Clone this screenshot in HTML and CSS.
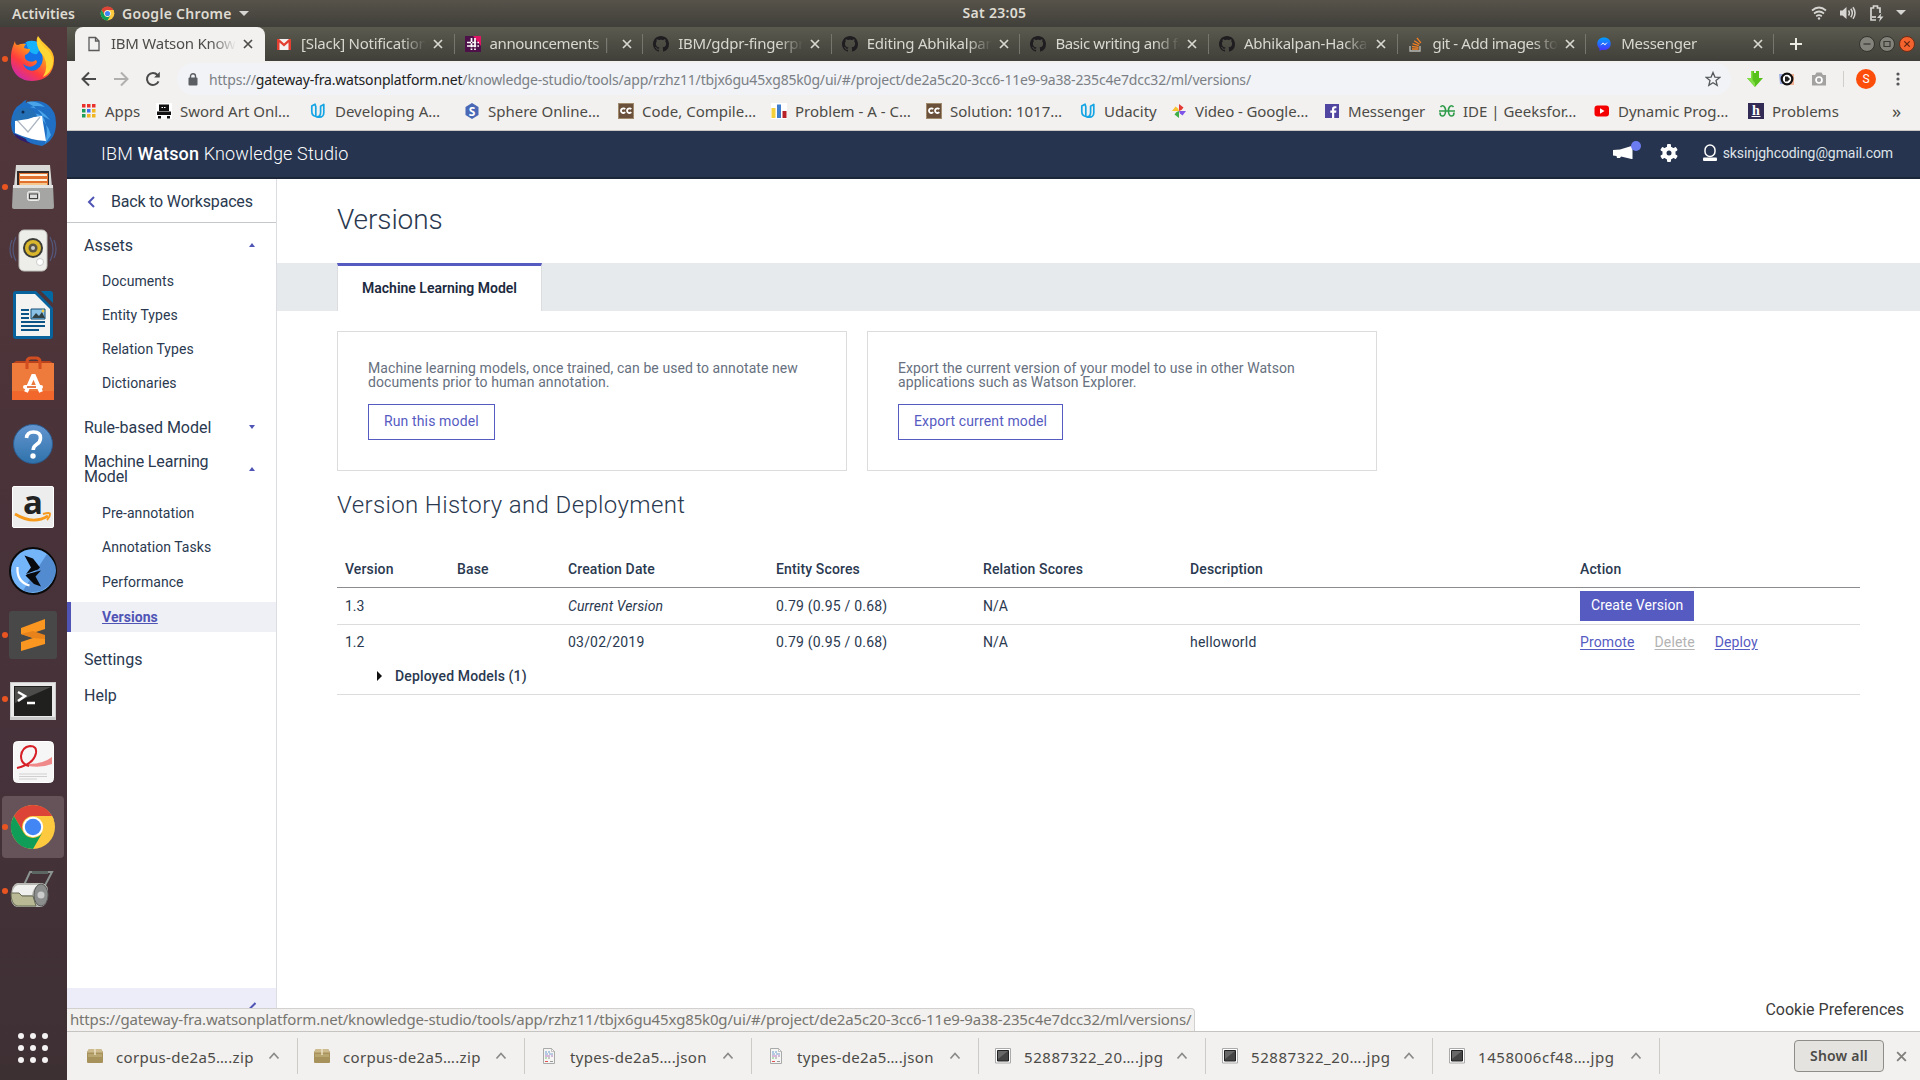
FILE: index.html
```html
<!DOCTYPE html>
<html lang="en">
<head>
<meta charset="utf-8">
<title>IBM Watson Knowledge Studio</title>
<link rel="stylesheet" href="styles.css">
</head>
<body>
<svg class="defs" aria-hidden="true">
  <symbol id="x" viewBox="0 0 12 12"><path d="M2 2l8 8M10 2l-8 8" fill="none" stroke="currentColor" stroke-width="1.7"/></symbol>
  <symbol id="chrome" viewBox="0 0 48 48">
    <circle cx="24" cy="24" r="22" fill="#fdc93f"/>
    <path d="M4.9 13A22 22 0 0 1 43.1 13H24A11 11 0 0 0 14.5 29.5Z" fill="#db4437"/>
    <path d="M4.9 13A22 22 0 0 0 24 46L33.5 29.5A11 11 0 0 1 14.5 29.5Z" fill="#109d58"/>
    <path d="M43.1 13H24v4h21z" fill="#fdc93f"/>
    <circle cx="24" cy="24" r="10.2" fill="#fff"/><circle cx="24" cy="24" r="8.2" fill="#4285f4"/>
  </symbol>
  <symbol id="github" viewBox="0 0 16 16"><path d="M8 0C3.58 0 0 3.58 0 8c0 3.54 2.29 6.53 5.47 7.59.4.07.55-.17.55-.38 0-.19-.01-.82-.01-1.49-2.01.37-2.53-.49-2.69-.94-.09-.23-.48-.94-.82-1.13-.28-.15-.68-.52-.01-.53.63-.01 1.08.58 1.23.82.72 1.21 1.87.87 2.33.66.07-.52.28-.87.51-1.07-1.78-.2-3.64-.89-3.64-3.95 0-.87.31-1.59.82-2.15-.08-.2-.36-1.02.08-2.12 0 0 .67-.21 2.2.82.64-.18 1.32-.27 2-.27s1.36.09 2 .27c1.53-1.04 2.2-.82 2.2-.82.44 1.1.16 1.92.08 2.12.51.56.82 1.27.82 2.15 0 3.07-1.87 3.75-3.65 3.95.29.25.54.73.54 1.48 0 1.07-.01 1.93-.01 2.2 0 .21.15.46.55.38A8.01 8.01 0 0 0 16 8c0-4.42-3.58-8-8-8z" fill="#1f1d20"/></symbol>
  <symbol id="udacity" viewBox="0 0 16 16"><path d="M5 1.200L1.800 3v5.500c0 2.700 1.500 4.500 4 5V3.700L5 1.200zM6.200 13.700c3 .3 4.400-1.500 4.400-4.300V3.200l3.200-1.700v8.300c0 2.500-1.800 4.400-4.200 4.400-1.300 0-2.500-.2-3.400-.5" fill="none" stroke="#16a5e4" stroke-width="1.700" stroke-linejoin="round"/></symbol>
  <symbol id="cc" viewBox="0 0 16 16"><path d="M0 0h16v16H0z" fill="#a08b6c"/><path d="M1 1h14v14H1z" fill="#6b513b"/><path d="M7.200 6.200A2.400 2.300 0 1 0 7.200 9.200M13.300 6.200A2.400 2.300 0 1 0 13.300 9.200" fill="none" stroke="#fff" stroke-width="1.800"/></symbol>
  <symbol id="box" viewBox="0 0 16 16"><path d="M2 1h12l2 3v10a1 1 0 0 1-1 1H1a1 1 0 0 1-1-1V4z" fill="#a8925c"/><path d="M2 1h12l2 3.500H0z" fill="#cdbb8d"/><path d="M1 6h14v3H1z" fill="#b9a570"/><path d="M7.300 1h1.400v6H7.300z" fill="#efe6cb"/></symbol>
  <symbol id="doc" viewBox="0 0 16 18"><path d="M2.500 1.500h8l3 3v12h-11z" fill="#f5f5f3" stroke="#a9a9a9"/><path d="M10.500 1.500v3h3z" fill="#fff" stroke="#a9a9a9" stroke-width=".7"/><path d="M4 5h2M7 5h2" stroke="#6b9bd0"/><path d="M4 7h3M8 7h4" stroke="#7a9fd0"/><path d="M4 9h5M10 9h2" stroke="#b77ac0"/><path d="M4 11h2" stroke="#74c77a"/><path d="M7 11h2M9 14.500h3" stroke="#999"/><path d="M4 14.500h3" stroke="#e05050"/></symbol>
  <symbol id="pic" viewBox="0 0 16 16"><path d="M.5.500h15v14.500H.500z" fill="#fff" stroke="#aaa"/><path d="M2.500 2.500h11v10.500h-11z" fill="#444" stroke="#222"/><path d="M3 3h10l-10 8z" fill="#686868"/></symbol>
  <symbol id="up" viewBox="0 0 12 12"><path d="M1.500 8.500L6 3.500l4.500 5" fill="none" stroke="#8a8a88" stroke-width="1.700"/></symbol>
</svg>

<header class="topbar">
  <span class="activities">Activities</span>
  <span class="appmenu"><svg width="15" height="15"><use href="#chrome"/></svg>Google Chrome<i class="caret"></i></span>
  <span class="clock">Sat 23:05</span>
  <span class="tray">
    <svg width="16" height="16" viewBox="0 0 16 16" fill="none" stroke="#d6d5d1" stroke-width="1.700"><path d="M1 5.500Q8-.5 15 5.500M3 8.500q5-4 10 0M5.200 11.200q2.800-2 5.600 0"/><circle cx="8" cy="13.500" r="1.200" fill="#d6d5d1" stroke="none"/></svg>
    <svg width="18" height="16" viewBox="0 0 18 16" fill="none" stroke="#d6d5d1" stroke-width="1.500"><path d="M1 5.500h2.500L7.500 2v12l-4-3.500H1z" fill="#d6d5d1" stroke="none"/><path d="M9.500 5.500q1.800 2.500 0 5M11.800 3.800q3 4.200 0 8.400M14 2.200q4 5.800 0 11.600"/></svg>
    <svg width="15" height="18" viewBox="0 0 15 18" fill="none" stroke="#d6d5d1" stroke-width="1.700"><path d="M7 16H2V4h2.500V2h4v2H11v5"/><path d="M3 13h4"/><path d="M12.500 9L8 14h3l-1 4 4.500-5.500h-3z" fill="#d6d5d1" stroke="none"/></svg>
    <i class="caret"></i>
  </span>
</header>

<div class="desktop">
<nav class="dock">
  <a class="app run"><svg width="48" height="48" viewBox="0 1 48 48"><defs><linearGradient id="ff" x1=".9" y1="0" x2=".2" y2="1"><stop offset="0" stop-color="#ffe93b"/><stop offset=".4" stop-color="#ff9c1c"/><stop offset=".7" stop-color="#ff3b3f"/><stop offset="1" stop-color="#c828b8"/></linearGradient></defs><circle cx="23" cy="22" r="15" fill="#1472e8"/><path d="M17 8Q26 4 33 12L28 20Q20 22 17 8z" fill="#16b3fb"/><path d="M6 7q0 4 3 4 4-2 8-1-2 2-2 4 3 1 6 1 0 4-5 6-1 4 3 6 5 2 8-1 3 3-3 6-5 2-10-2 4 9 13 6 9-5 6-17-1-5-5-9-1-5 1-8 3 5 9 10 8 7 7 15-1 19-22 20C9 47 1 36 2 24 2 16 4 12 6 7z" fill="url(#ff)"/><path d="M29 3q3 8 9 12 7 7 6 15-2 9-10 13 6-10 1-20-7-8-7-14z" fill="#ffd633"/></svg></a>
  <a class="app"><svg width="48" height="48" viewBox="0 0 48 48"><path d="M2 25Q2 10 13 4q2-3 5-3-2 2-1 3Q30-1 39 6q8 6 8 18 0 17-14 23Q15 44 5 36q-3-5-3-11z" fill="#1f6fc4"/><path d="M17 3q10-2 19 5-8-2-15 0 12 2 20 13-9-6-18-7 15 7 19 22l-6 9Q44 16 17 3z" fill="#4aa4ea"/><path d="M4 34q5 9 21 11-8-2-8-5z" fill="#301d6b"/><path d="M6 20l27-3 4 25Q21 41 6 34z" fill="#fff"/><path d="M8 21l11 12 12-15" fill="none" stroke="#aeb7c2" stroke-width="1.300"/><path d="M14 9Q4 12 6 22l13-2 9-3q-4-9-14-8z" fill="#2370b7"/><circle cx="14" cy="13" r="1.500" fill="#102b50"/></svg></a>
  <a class="app run"><svg width="48" height="48" viewBox="-1 -1 48 48"><path d="M6 1h34l2 22H4z" fill="#d8d8d6"/><path d="M7 7h32v17H7z" fill="#332b27"/><path d="M9 9h29v14H9z" fill="#e0712e"/><path d="M10 10h27v2H10zM10 15h27v2H10z" fill="#fff3df"/><path d="M10 19h27v5H10z" fill="#f6c88e"/><path d="M3 21h40l1 22q0 2-2 2H4q-2 0-2-2z" fill="#a5a5a3"/><path d="M3 21h40v3H3z" fill="#e3e3e1"/><rect x="17.500" y="27.500" width="12" height="9" rx="2" fill="#c9c9c7" stroke="#eee"/><rect x="19.500" y="30" width="8" height="4.500" fill="#ddd" stroke="#444"/></svg></a>
  <a class="app"><svg width="48" height="48" viewBox="0 0 48 48"><path d="M7 10Q1 22 7 34M3 13q-4 9 0 18M41 10q6 12 0 24M45 13q4 9 0 18" fill="none" stroke="#54587d" stroke-width="1.200"/><rect x="10" y="3" width="28" height="41" rx="5" fill="#ededea" stroke="#bfc0bb"/><circle cx="24" cy="21" r="10" fill="#3b3b38"/><circle cx="24" cy="21" r="8" fill="#d9b62c"/><circle cx="24" cy="21" r="4.500" fill="#5a5643"/><circle cx="24" cy="21" r="2" fill="#ccc"/><circle cx="31" cy="35" r="3.500" fill="#fff" stroke="#ccc"/></svg></a>
  <a class="app"><svg width="48" height="48" viewBox="0 0 48 48"><path d="M4 3q0-3 3-3h20l17 17v28q0 3-3 3H7q-3 0-3-3z" fill="#08639c"/><path d="M32 0h9q3 0 3 3v9z" fill="#0369a3"/><path d="M7 3h19l15 15v27H7z" fill="#f3f3f2"/><path d="M12 19h8M12 23h8M12 27h8M12 31h24M12 35h24M12 39h18" stroke="#0b5486" stroke-width="1.900"/><path d="M22 18h14v10H22z" fill="#8ac1e7" stroke="#124c77"/><path d="M23 27l4-5 3 3 3-4 3 6z" fill="#324244"/><circle cx="34" cy="20" r="1.400" fill="#f0ca43"/></svg></a>
  <a class="app"><svg width="48" height="48" viewBox="0 -1 48 48"><path d="M3 8l4-3h34l4 3z" fill="#b9411b"/><path d="M3 7h42v37H3z" fill="#ee7a3c"/><path d="M3 35h42v9H3z" fill="#f2682c"/><path d="M18 13V6q0-4 4-4h5q4 0 4 4v7" fill="none" stroke="#d24d20" stroke-width="3"/><path d="M17 36l7-16h1l7 16" fill="none" stroke="#fff" stroke-width="4"/><rect x="14" y="29" width="20" height="4" rx="2" fill="#fff"/><path d="M18 31h9" stroke="#e25c24" stroke-width="1.600"/></svg></a>
  <a class="app"><svg width="48" height="48" viewBox="0 -1 48 48"><defs><linearGradient id="hp" x2="0" y2="1"><stop stop-color="#6496d0"/><stop offset="1" stop-color="#2f72ab"/></linearGradient></defs><circle cx="24" cy="24" r="19.500" fill="url(#hp)" stroke="#2b5d91"/><path d="M17.500 18q.5-6 7-6 7 0 7 6 0 4-4 6.500-3.300 2-3.300 5.500" fill="none" stroke="#fff" stroke-width="3.600"/><circle cx="24" cy="36" r="2.700" fill="#fff"/></svg></a>
  <a class="app"><svg width="48" height="48" viewBox="0 0 48 48"><rect x="3.500" y="3.500" width="41" height="41" rx="1.500" fill="#ededed" stroke="#fff"/><text x="24" y="31" class="ic-amz">a</text><path d="M6 31q18 11 33 2" fill="none" stroke="#f79a1c" stroke-width="2.800"/><path d="M34 31q7-2 7 0 0 3-3 6" fill="none" stroke="#f79a1c" stroke-width="2"/></svg></a>
  <a class="app"><svg width="48" height="48" viewBox="0 0 48 48"><circle cx="24" cy="24" r="23" fill="#74b4f8" stroke="#0a0a0a" stroke-width="2"/><path d="M14 43.500L38 7q15 13 5 28-11 14-29 8.500z" fill="#528bd0"/><path d="M15.500 8.500L24 11.500l7 9-2 2-12 4.500 5-6.500z" fill="#080a0e"/><path d="M32 23.500l-5.500 6 5.500 10-7-2.500-8.500-8.500 2-1.500z" fill="#080a0e"/><path d="M8.500 20q-1 15 12 18.500" fill="none" stroke="#fff" stroke-width="2.200"/></svg></a>
  <a class="app run"><svg width="48" height="48" viewBox="0 0 48 48"><rect width="48" height="48" rx="3" fill="#484848"/><path d="M12 17l24-9v10l-12 4 12 4v7l-24 7V31l12-4-12-4z" fill="#fb9620"/><path d="M12 23l12-3 12 4v4l-12-1z" fill="#e8821a"/></svg></a>
  <a class="app run"><svg width="48" height="48" viewBox="0 0 48 48"><path d="M1 7h46v38H1z" fill="#c9c9c9"/><path d="M2 8h44v34H2z" fill="#e9e9e9"/><path d="M5 11h38v30H5z" fill="#20201f"/><path d="M6 12h36L6 28z" fill="#4c4c4b"/><path d="M9 17l7 4-7 5M18 28h8" fill="none" stroke="#fff" stroke-width="2.500"/></svg></a>
  <a class="app"><svg width="48" height="48" viewBox="0 0 48 48"><rect x="4.500" y="2.500" width="40" height="41" rx="4" fill="#f6f6f6" stroke="#fff"/><path d="M10 35h28M10 37.500h28M10 40h18" stroke="#cfcfcf" stroke-width="1.200"/><path d="M20 25q14 0 23-7v7q-10 4-24 2z" fill="#f08a8a"/><path d="M8 29Q25 25 27 14 28 7 21 7q-8 1-9 10 0 8 8 10" fill="none" stroke="#d61f26" stroke-width="2"/></svg></a>
  <a class="app run active"><svg width="48" height="48"><use href="#chrome"/></svg></a>
  <a class="app run"><svg width="48" height="48" viewBox="0 -2 48 48"><path d="M15 16l6-13h22L32 24" fill="none" stroke="#8b9490" stroke-width="2"/><path d="M23 2h16v3H23z" fill="#5c6662"/><path d="M8 14h25q7 1 6 12t-7 12H8q-7-2-6-12 1-11 6-12z" fill="#b9b9b3"/><path d="M9 16h20q-5 3-6 10l-20 0q1-9 6-10z" fill="#f0f0ee"/><path d="M2 24h8l3 3h11l3 10H8q-6-2-6-13z" fill="#bab996" stroke="#666a52"/><ellipse cx="32" cy="26" rx="7" ry="11" fill="#8c8e8d" stroke="#5b5d5c"/><circle cx="32" cy="26" r="3.500" fill="#ccc"/></svg></a>
  <a class="grid"><svg width="32" height="32" viewBox="0 0 32 32" fill="#f4f2f2"><circle cx="4" cy="4" r="3"/><circle cx="16" cy="4" r="3"/><circle cx="28" cy="4" r="3"/><circle cx="4" cy="16" r="3"/><circle cx="16" cy="16" r="3"/><circle cx="28" cy="16" r="3"/><circle cx="4" cy="28" r="3"/><circle cx="16" cy="28" r="3"/><circle cx="28" cy="28" r="3"/></svg></a>
</nav>

<div class="browser">
  <div class="tabs">
    <div class="tab on"><svg width="16" height="16" viewBox="0 0 16 16" fill="none" stroke="#5a5a5a" stroke-width="1.300"><path d="M3 1.500h6.500L13 5v9.500H3z"/><path d="M9.500 1.500V5H13"/></svg><span>IBM Watson Knowledge</span><svg class="close" width="12" height="12"><use href="#x"/></svg></div>
    <div class="tab"><svg width="16" height="16" viewBox="0 0 16 16"><path d="M1 3h14v11H1z" fill="#f4f1f0"/><path d="M1 14V3h2l5 4.500L13 3h2v11h-2.500V6.500L8 10.500l-4.500-4V14z" fill="#e33e2f"/></svg><span>[Slack] Notification</span><svg class="close" width="12" height="12"><use href="#x"/></svg></div>
    <div class="tab"><svg width="16" height="16" viewBox="0 0 16 16"><path d="M0 0h16v16H0z" fill="#4d1049"/><path d="M8 0h8v10z" fill="#e01563"/><path d="M6.500 2v12M10 2v12M2 6.500h12M2 10h12" stroke="#fff" stroke-width="1.700" stroke-dasharray="4 1.200"/></svg><span class="wide">announcements | IBM</span><svg class="close" width="12" height="12"><use href="#x"/></svg></div>
    <div class="tab"><svg width="16" height="16"><use href="#github"/></svg><span>IBM/gdpr-fingerprint</span><svg class="close" width="12" height="12"><use href="#x"/></svg></div>
    <div class="tab"><svg width="16" height="16"><use href="#github"/></svg><span>Editing Abhikalpan</span><svg class="close" width="12" height="12"><use href="#x"/></svg></div>
    <div class="tab"><svg width="16" height="16"><use href="#github"/></svg><span class="wide">Basic writing and for</span><svg class="close" width="12" height="12"><use href="#x"/></svg></div>
    <div class="tab"><svg width="16" height="16"><use href="#github"/></svg><span>Abhikalpan-Hackathon</span><svg class="close" width="12" height="12"><use href="#x"/></svg></div>
    <div class="tab"><svg width="16" height="16" viewBox="0 0 16 16" fill="none"><path d="M2 10v5h10v-5" stroke="#b9b9b4" stroke-width="1.300"/><path d="M4 13h6.500M4 10.500l6.500.8M4.600 7.700l6.200 1.900M6.200 4.700l5.400 3.500M8.900 1.800l4 5" stroke="#f48024" stroke-width="1.300"/></svg><span class="wide">git - Add images to</span><svg class="close" width="12" height="12"><use href="#x"/></svg></div>
    <div class="tab"><svg width="16" height="16" viewBox="0 0 16 16"><defs><linearGradient id="ms" x2="0" y2="1"><stop stop-color="#00a0ff"/><stop offset="1" stop-color="#4a2cff"/></linearGradient></defs><path d="M8 1.500c4 0 6.700 2.700 6.700 6.200S12 14 8 14c-.8 0-1.500-.1-2.200-.3L3.500 15v-2.600C2 11.200 1.300 9.600 1.300 7.700 1.300 4.200 4 1.500 8 1.500z" fill="url(#ms)"/><path d="M4 9.500l3-3 1.800 1.500L12 6 9 9.200 7.200 7.700z" fill="#fff"/></svg><span>Messenger</span><svg class="close" width="12" height="12"><use href="#x"/></svg></div>
    <svg class="plus" width="12" height="12" viewBox="0 0 12 12"><path d="M6 0v12M0 6h12" stroke="#ecebe4" stroke-width="2"/></svg>
    <div class="wm">
      <svg width="16" height="16" viewBox="0 0 16 16"><circle cx="8" cy="8" r="7.500" fill="#83827b" stroke="#33322d"/><path d="M4.500 8h7" stroke="#3b3a35" stroke-width="1.300"/></svg>
      <svg width="16" height="16" viewBox="0 0 16 16"><circle cx="8" cy="8" r="7.500" fill="#83827b" stroke="#33322d"/><path d="M5 5.500h6v5H5z" fill="none" stroke="#3b3a35" stroke-width="1.200"/></svg>
      <svg width="16" height="16" viewBox="0 0 16 16"><circle cx="8" cy="8" r="7.500" fill="#f4622d" stroke="#6d2d16"/><path d="M5.300 5.300l5.400 5.400M10.700 5.300l-5.400 5.400" stroke="#5a2410" stroke-width="1.200"/></svg>
    </div>
  </div>

  <div class="nav">
    <svg width="16" height="16" viewBox="0 0 16 16" fill="none" stroke="#4a4a4a" stroke-width="2"><path d="M15 8H2M8 1.500L1.500 8 8 14.500"/></svg>
    <svg width="16" height="16" viewBox="0 0 16 16" fill="none" stroke="#b0afad" stroke-width="2"><path d="M1 8h13M8 1.500L14.500 8 8 14.500"/></svg>
    <svg width="16" height="16" viewBox="0 0 16 16" fill="none" stroke="#4a4a4a" stroke-width="2"><path d="M13.500 10.300A6 6 0 1 1 12.500 4"/><path d="M14.800.8v5.700H9.100z" fill="#4a4a4a" stroke="none"/></svg>
    <div class="omni">
      <svg width="10" height="13" viewBox="0 0 10 13"><rect x=".5" y="4.500" width="9" height="8" rx="1" fill="#5b5e63"/><path d="M2.500 5V3.200a2.500 2.500 0 0 1 5 0V5" fill="none" stroke="#5b5e63" stroke-width="1.400"/></svg>
      <span class="url">https://<b>gateway-fra.watsonplatform.net</b>/knowledge-studio/tools/app/rzhz11/tbjx6gu45xg85k0g/ui/#/project/de2a5c20-3cc6-11e9-9a38-235c4e7dcc32/ml/versions/</span>
      <svg width="16" height="16" viewBox="0 0 16 16"><path d="M8 1.500l1.900 4.600 4.900.3-3.800 3.200 1.200 4.800L8 11.800l-4.200 2.600L5 9.600 1.200 6.400l4.900-.3z" fill="none" stroke="#55585c" stroke-width="1.300"/></svg>
    </div>
    <svg width="16" height="16" viewBox="0 0 16 16"><path d="M4 0h3v2h2V0h3v7h4l-8 9-8-9h4z" fill="#57c11c"/><path d="M4 0h1.500v9L8 12v4L0 7h4z" fill="#83dd48"/></svg>
    <svg width="16" height="16" viewBox="0 0 16 16"><path d="M0 3h7v10H1z" fill="#9eaee0"/><path d="M9 3h6v11H9z" fill="#f2b295"/><circle cx="8" cy="8" r="5.300" fill="#fff" stroke="#111" stroke-width="2.200"/><path d="M6 5.500h2.500L11 8l-2.500 2.500H6z" fill="#222"/></svg>
    <svg width="16" height="16" viewBox="0 0 16 16"><path d="M1 4h3l1.500-2.500h5L12 4h3v10.500H1z" fill="#a3a2a0"/><circle cx="8" cy="9" r="3" fill="none" stroke="#fff" stroke-width="1.700"/></svg>
    <i class="vsep"></i>
    <span class="avatar">S</span>
    <svg width="4" height="16" viewBox="0 0 4 16" fill="#55555a"><circle cx="2" cy="3" r="1.600"/><circle cx="2" cy="8" r="1.600"/><circle cx="2" cy="13" r="1.600"/></svg>
  </div>

  <div class="marks">
    <a><svg width="16" height="16" viewBox="0 0 16 16"><path d="M1 1h3.500v3.500H1zM6 1h3.500v3.500H6zM11 1h3.500v3.500H11z" fill="#e9302a"/><path d="M1 6h3.500v3.500H1zM1 11h3.500v3.500H1z" fill="#1d9d58"/><path d="M6 6h3.500v3.500H6z" fill="#3f6ef0"/><path d="M11 6h3.500v3.500H11zM6 11h3.500v3.500H6zM11 11h3.500v3.500H11z" fill="#f0b520"/></svg>Apps</a>
    <a><svg width="16" height="16" viewBox="0 0 16 16"><path d="M0 0h16v16H0z" fill="#fff"/><path d="M3 1.500h10V8H3zM1 8.500h14v3.500H1zM2 13h3v2.500H2zM11 13h3v2.500h-3zM4 12l8 3" fill="#111"/><path d="M5.500 4.500h5" stroke="#fff" stroke-dasharray="1.500 1"/></svg>Sword Art Onl…</a>
    <a><svg width="18" height="16"><use href="#udacity"/></svg>Developing A…</a>
    <a><svg width="16" height="16" viewBox="0 0 16 16"><path d="M8 0l6.500 4v8L8 16l-6.500-4V4z" fill="#4a68b6"/><text x="8" y="12.500" class="ic-s">S</text></svg>Sphere Online…</a>
    <a><svg width="16" height="16"><use href="#cc"/></svg>Code, Compile…</a>
    <a><svg width="16" height="16" viewBox="0 0 16 16"><path d="M0 0h16v16H0z" fill="#fff"/><path d="M.5 5h4v10h-4z" fill="#f3cf3a"/><path d="M6 1.500h4V15H6z" fill="#3e7dcd"/><path d="M11.500 8h4v7h-4z" fill="#b7222a"/></svg>Problem - A - C…</a>
    <a><svg width="16" height="16"><use href="#cc"/></svg>Solution: 1017…</a>
    <a><svg width="16" height="16"><use href="#udacity"/></svg>Udacity</a>
    <a><svg width="16" height="16" viewBox="0 0 16 16"><path d="M8 8V1l4.500 3.500L10.500 7z" fill="#e53a35"/><path d="M8 8h7l-3.500 4.500L9 10.500z" fill="#7e55e8"/><path d="M8 8v7l-4.500-3.500L5.500 9z" fill="#3fae49"/><path d="M8 8H1l3.500-4.500L7 5.500z" fill="#f8c32c"/></svg>Video - Google…</a>
    <a><svg width="16" height="16" viewBox="0 0 16 16"><path d="M1 1h14v14H1z" fill="#5145a2"/><path d="M8 15V9.700H6.300V7.500H8V6q0-2.700 2.800-2.700h1.600v2h-1.200q-1 0-1 1v1.200h2.200l-.3 2.200h-1.900V15z" fill="#fff"/></svg>Messenger</a>
    <a><svg width="16" height="16" viewBox="0 0 16 16" fill="none" stroke="#2f9c4b" stroke-width="1.600"><path d="M0 8h16M1.500 4Q3 2 5 3.300 7 5 6.500 9q-.5 4-3 4Q1 13 1 9.500M14.500 4Q13 2 11 3.300 9 5 9.500 9q.5 4 3 4 2.500 0 2.500-3.500"/></svg>IDE | Geeksfor…</a>
    <a><svg width="16" height="16" viewBox="0 0 16 16"><rect x=".5" y="2.500" width="14.500" height="11" rx="3" fill="#f40000"/><path d="M6 5.200v5.600L10.500 8z" fill="#fff"/></svg>Dynamic Prog…</a>
    <a><svg width="16" height="16" viewBox="0 0 16 16"><path d="M0 0h16v16H0z" fill="#322b56"/><text x="8" y="12" class="ic-h">h</text><path d="M3.500 13.500h9" stroke="#fff"/></svg>Problems</a>
    <a class="more">»</a>
  </div>

  <div class="apphead">
    <h1>IBM <b>Watson</b> Knowledge Studio</h1>
    <span class="mega"><svg width="20" height="16" viewBox="0 0 20 16"><path d="M0 5l7-.5L18.500 1h1v13h-1L8 11.500 7 13H4l-.5-2L0 10.500z" fill="#fff"/></svg></span>
    <svg class="gear" width="18" height="18" viewBox="0 0 18 18"><g fill="#fff"><circle cx="9" cy="9" r="6.600"/><rect x="7" y="0" width="4" height="18" rx="1"/><rect x="7" y="0" width="4" height="18" rx="1" transform="rotate(60 9 9)"/><rect x="7" y="0" width="4" height="18" rx="1" transform="rotate(120 9 9)"/></g><circle cx="9" cy="9" r="2.500" fill="#26344f"/></svg>
    <span class="user"><svg width="16" height="18" viewBox="0 0 16 18"><rect x="3" y="1" width="10" height="11.500" rx="5" fill="none" stroke="#fff" stroke-width="1.500"/><rect x="1" y="13.500" width="14" height="3.500" rx="1" fill="#fff"/></svg>sksinjghcoding@gmail.com</span>
  </div>

  <div class="page">
    <aside class="side">
      <a class="back"><svg width="8" height="12" viewBox="0 0 8 12"><path d="M7 1L2 6l5 5" fill="none" stroke="#4f54b5" stroke-width="2"/></svg>Back to Workspaces</a>
      <div class="sec s1">Assets<i class="tri up"></i></div>
      <a class="sub">Documents</a><a class="sub">Entity Types</a><a class="sub">Relation Types</a><a class="sub">Dictionaries</a>
      <div class="sec s2">Rule-based Model<i class="tri down"></i></div>
      <div class="sec s3"><span>Machine Learning Model</span><i class="tri up"></i></div>
      <a class="sub">Pre-annotation</a><a class="sub">Annotation Tasks</a><a class="sub last">Performance</a>
      <a class="sub on"><u>Versions</u></a>
      <div class="sec s4">Settings</div>
      <div class="sec s5">Help</div>
      <div class="collapse"><svg width="7" height="12" viewBox="0 0 7 12"><path d="M6.500 1L1.500 6l5 5" fill="none" stroke="#4f54b5" stroke-width="2"/></svg></div>
    </aside>
    <main class="main">
      <h2>Versions</h2>
      <div class="strip"><span>Machine Learning Model</span></div>
      <div class="cards">
        <section class="card"><p>Machine learning models, once trained, can be used to annotate new documents prior to human annotation.</p><button>Run this model</button></section>
        <section class="card"><p>Export the current version of your model to use in other Watson applications such as Watson Explorer.</p><button>Export current model</button></section>
      </div>
      <h3>Version History and Deployment</h3>
      <div class="table">
        <div class="row head"><span>Version</span><span>Base</span><span>Creation Date</span><span>Entity Scores</span><span>Relation Scores</span><span>Description</span><span>Action</span></div>
        <div class="row r1"><span>1.3</span><span></span><em>Current Version</em><span class="num">0.79 (0.95 / 0.68)</span><span>N/A</span><span></span><span><button class="primary">Create Version</button></span></div>
        <div class="row r2"><span>1.2</span><span></span><span class="num">03/02/2019</span><span class="num">0.79 (0.95 / 0.68)</span><span>N/A</span><span class="num">helloworld</span><span class="acts"><a>Promote</a><a class="off">Delete</a><a>Deploy</a></span></div>
        <div class="deployed"><i></i>Deployed Models (1)</div>
      </div>
      <footer>Cookie Preferences</footer>
    </main>
    <div class="status">https://gateway-fra.watsonplatform.net/knowledge-studio/tools/app/rzhz11/tbjx6gu45xg85k0g/ui/#/project/de2a5c20-3cc6-11e9-9a38-235c4e7dcc32/ml/versions/</div>
  </div>

  <div class="downloads">
    <div class="dl"><svg width="16" height="16"><use href="#box"/></svg><span>corpus-de2a5….zip</span><svg width="12" height="12"><use href="#up"/></svg></div>
    <div class="dl"><svg width="16" height="16"><use href="#box"/></svg><span>corpus-de2a5….zip</span><svg width="12" height="12"><use href="#up"/></svg></div>
    <div class="dl"><svg width="16" height="18"><use href="#doc"/></svg><span>types-de2a5….json</span><svg width="12" height="12"><use href="#up"/></svg></div>
    <div class="dl"><svg width="16" height="18"><use href="#doc"/></svg><span>types-de2a5….json</span><svg width="12" height="12"><use href="#up"/></svg></div>
    <div class="dl jpg"><svg width="16" height="16"><use href="#pic"/></svg><span>52887322_20….jpg</span><svg width="12" height="12"><use href="#up"/></svg></div>
    <div class="dl jpg"><svg width="16" height="16"><use href="#pic"/></svg><span>52887322_20….jpg</span><svg width="12" height="12"><use href="#up"/></svg></div>
    <div class="dl jpg"><svg width="16" height="16"><use href="#pic"/></svg><span>1458006cf48….jpg</span><svg width="12" height="12"><use href="#up"/></svg></div>
    <button class="showall">Show all</button>
    <svg class="dlx" width="13" height="13"><use href="#x"/></svg>
  </div>
</div>
</div>
</body>
</html>
```
FILE: styles.css
```css
* { box-sizing: border-box; }
html, body { height: 100%; }
body {
  margin: 0; width: 1920px; height: 1080px; overflow: hidden;
  display: flex; flex-direction: column;
  font-family: "Noto Sans", "Open Sans", sans-serif;
}
svg { flex: none; display: block; }
button { font: inherit; margin: 0; white-space: nowrap; }
.defs { display: none; }

/* desktop top bar */
.topbar {
  height: 27px; flex: none; display: grid; grid-template-columns: 88px 862.500px 1fr auto;
  align-items: center; padding: 0 14px 2px 12px;
  background: linear-gradient(#57534b, #403f39);
  color: #dfdbd2; font-size: 14px; font-weight: 600;
}
.activities { letter-spacing: .05px; padding-top: 1px; }
.appmenu { display: flex; align-items: center; gap: 7px; letter-spacing: .3px; padding-top: 1px; }
.caret { border: 5px solid transparent; border-top-color: #d6d5d1; border-bottom: 0; }
.clock { letter-spacing: .3px; white-space: nowrap; }
.tray { display: flex; align-items: center; gap: 12px; }
.tray .caret { margin-left: 0; }

.desktop { flex: 1; display: flex; min-height: 0; }

/* launcher */
.dock {
  width: 67px; flex: none; display: flex; flex-direction: column;
  background: linear-gradient(#53383b, #4a3339 40%, #46323a 70%, #3d3033);
}
.app { height: 64px; flex: none; display: flex; align-items: center; position: relative; padding-left: 9px; }
.app.run::before { content: ""; position: absolute; left: 2px; top: 29px; width: 6px; height: 6px; border-radius: 50%; background: #e95420; }
.app.active { margin: 1px 3px 1px 2px; height: 62px; padding-left: 7px; background: #66535a; border-radius: 4px; }
.app.active::before { left: 0; top: 28px; }
.grid { margin: auto 0 16px 17px; }
.ic-amz { font: bold 33px "Open Sans", sans-serif; text-anchor: middle; fill: #222; }
.ic-s { font: bold 12px "Noto Sans", sans-serif; text-anchor: middle; fill: #fff; }
.ic-h { font: bold 14px "Liberation Serif", serif; text-anchor: middle; fill: #fff; }

.browser { flex: 1; min-width: 0; display: flex; flex-direction: column; background: #fff; }

/* tabs */
.tabs {
  height: 34px; flex: none; display: flex; align-items: center; padding-left: 8px;
  background: linear-gradient(#5b5a4f, #403f39); color: #d9d8d0; font-size: 15px;
}
.tab { width: 188.600px; height: 34px; display: flex; align-items: center; padding-left: 11px; position: relative; }
.tab span {
  width: 126px; margin: 0 0 2px 9px; overflow: hidden; white-space: nowrap; letter-spacing: -.25px;
  -webkit-mask-image: linear-gradient(90deg, #000 100px, transparent 125px);
  mask-image: linear-gradient(90deg, #000 100px, transparent 125px);
}
.tab .wide { letter-spacing: -.4px; }
.tab .close { margin-left: 5px; }
.tab:nth-child(n+3)::before { content: ""; position: absolute; left: 0; top: 7px; width: 1px; height: 20px; background: #77766d; }
.tab.on { width: 190px; border-radius: 8px 8px 0 0; background: #f2f1ef; color: #4d4c48; }
.tab:nth-child(9)::after { content: ""; position: absolute; right: 0; top: 7px; width: 1px; height: 20px; background: #77766d; }
.plus { margin-left: 16px; }
.wm { margin: 0 5px 0 auto; display: flex; gap: 4px; }

/* toolbar */
.nav { height: 36px; flex: none; display: flex; align-items: center; padding: 0 20px 0 14px; gap: 16px; background: #f2f1ef; }
.omni {
  height: 32px; flex: 1; display: flex; align-items: center; gap: 11px; padding: 0 10px 0 11px;
  background: #f1f3f6; border-radius: 16px; color: #7b7f85;
}
.url { flex: 1; font-size: 14px; letter-spacing: -.18px; white-space: nowrap; }
.url b { font-weight: 400; color: #222; }
.vsep { width: 1px; height: 16px; background: #cfcecb; }
.avatar { width: 20px; height: 20px; margin: 0 4px 0 -4px; border-radius: 50%; background: #fd4d0b; color: #fff; font: 12px/20px Roboto, sans-serif; text-align: center; }

/* bookmarks */
.marks {
  height: 34px; flex: none; display: grid; align-items: center; padding: 0 0 4px 14px;
  grid-template-columns: 75px 153px 155px 154px 153px 155px 154px 91px 153px 115px 155px 154px 141px 1fr;
  background: #f2f1ef; border-bottom: 1px solid #c9c8c5; color: #4c4b47; font-size: 15px;
}
.marks a { display: flex; align-items: center; gap: 8px; white-space: nowrap; height: 24px; line-height: 22px; padding-bottom: 1px; }
.marks a:nth-child(9), .marks a:nth-child(10) { letter-spacing: -.1px; }
.marks .more { padding-left: 3px; font-size: 18px; }

/* application header */
.apphead {
  height: 48px; flex: none; display: flex; align-items: center; padding: 0 27px 2px 34px;
  background: #26344f; border-bottom: 2px solid #1b2738; color: #dfe3e9; font-family: Roboto, sans-serif;
}
.apphead h1 { margin: 0; flex: 1; font-size: 18px; font-weight: 300; color: #fff; letter-spacing: .16px; }
.apphead b { font-weight: 500; }
.mega { position: relative; margin-right: 27px; }
.mega::after { content: ""; position: absolute; left: 18px; top: -4px; width: 10px; height: 10px; border-radius: 50%; background: #6b7cf0; }
.gear { margin-right: 24px; }
.user { display: flex; align-items: center; gap: 5px; font-size: 14px; letter-spacing: -.08px; }

.page { flex: 1; min-height: 0; display: flex; position: relative; font-family: Roboto, sans-serif; color: #2a3950; }

/* sidebar */
.side { width: 210px; flex: none; display: flex; flex-direction: column; border-right: 1px solid #dcdde2; font-size: 14px; letter-spacing: .05px; }
.back { height: 44px; display: flex; align-items: center; gap: 16px; padding: 2px 0 0 20px; border-bottom: 1px solid #c6c7cb; font-size: 16px; letter-spacing: -.18px; }
.sec { display: flex; align-items: center; padding: 0 21px 0 17px; font-size: 16px; line-height: 15px; letter-spacing: 0; }
.sec span { width: 130px; letter-spacing: -.15px; }
.tri { margin-left: auto; border: 3px solid transparent; }
.tri.up { border-bottom: 4px solid #4f54b5; border-top: 0; }
.tri.down { border-top: 4px solid #4f54b5; border-bottom: 0; }
.sub { height: 34px; display: flex; align-items: center; padding-left: 35px; }
.s1 { height: 41px; padding-top: 3px; }
.s2 { height: 34px; margin-top: 10px; }
.s3 { height: 52px; padding-bottom: 2px; }
.sub.last { height: 35px; padding-top: 1px; }
.sub.on { height: 30px; margin-top: 3px; padding: 0 0 1px 31px; border-left: 4px solid #4f54b5; background: #eff0f5; color: #4f54b5; font-weight: 700; }
.s4 { height: 36px; margin-top: 9px; }
.s5 { height: 36px; }
.collapse { margin-top: auto; height: 43px; flex: none; background: #ecedf8; padding: 14px 0 0 182px; }

/* main */
.main { flex: 1; min-width: 0; display: flex; flex-direction: column; }
h2 { margin: 0; height: 84px; padding: 0 0 3px 60px; display: flex; align-items: center; font-size: 28px; font-weight: 300; letter-spacing: -.1px; }
.strip { height: 48px; flex: none; background: #e7eaed; padding-left: 60px; }
.strip span {
  display: flex; align-items: center; justify-content: center; width: 205px; height: 48px; color: #1c2a40; padding-bottom: 1px;
  background: #fff; border: 1px solid #dcdddf; border-top: 3px solid #565bc2; border-bottom: 0; font-size: 14px; font-weight: 600;
}
.cards { display: flex; gap: 20px; padding: 20px 0 0 60px; }
.card { width: 510px; height: 140px; border: 1px solid #dcdcdc; padding: 29px 30px 0; font-size: 14px; }
.card p { margin: 0 0 15px; line-height: 14px; color: #66707e; letter-spacing: .075px; }
.card button { display: block; height: 36px; padding: 0 15px 2px; border: 1px solid #565bc2; background: #fff; color: #565bc2; letter-spacing: .13px; }
h3 { margin: 22px 0 0 60px; height: 24px; line-height: 24px; font-size: 24px; font-weight: 300; letter-spacing: .37px; }
.table { margin: 34px 60px 0; font-size: 14px; border-bottom: 1px solid #dcdcdc; height: 144px; }
.row { display: grid; grid-template-columns: 112px 111px 208px 207px 207px 390px 1fr; align-items: center; padding: 0 0 1px 8px; }
.row.head { height: 37px; padding-bottom: 0; border-bottom: 1px solid #8c8c90; font-weight: 500; letter-spacing: .13px; }
.r1 { height: 37px; border-bottom: 1px solid #dcdcdc; }
.r1 em { letter-spacing: .1px; }
.r2 { height: 35px; }
.num { letter-spacing: .2px; }
.primary { display: block; height: 30px; margin-top: 1px; padding: 0 11px 2px; border: 0; background: #565bc2; color: #fff; letter-spacing: .07px; }
.acts { display: flex; gap: 20px; color: #565bc2; letter-spacing: .12px; }
.acts a { text-decoration: underline; text-underline-offset: 2px; }
.acts .off { color: #b3b3b3; }
.deployed { display: flex; align-items: center; height: 31px; padding-left: 40px; gap: 13px; font-weight: 500; letter-spacing: .14px; }
.deployed i { border: 5px solid transparent; border-left-color: #111; border-right: 0; }
footer { margin: auto 16px 12px auto; font-size: 16px; line-height: 19px; color: #3c3c3c; }

.status {
  position: absolute; left: 0; bottom: 0; width: 1128px; height: 23px; padding-left: 3px;
  background: #f2f1ef; border: 1px solid #d2d1d0; border-width: 1px 1px 0 0; border-radius: 0 4px 0 0;
  font: 15px/20px "Noto Sans", sans-serif; letter-spacing: -.16px; color: #77756f; white-space: nowrap;
}

/* downloads */
.downloads { height: 49px; flex: none; display: flex; align-items: center; padding: 0 12px 0 4px; background: #f2f1ef; border-top: 1px solid #c5c4c1; color: #4c4b47; font-size: 15px; }
.dl { width: 227px; height: 36px; display: flex; align-items: center; padding: 0 17px 0 16px; border-right: 1px solid #cccbc8; }
.dl span { margin: 1px auto 0 13px; letter-spacing: .32px; white-space: nowrap; }
.dl.jpg span { letter-spacing: .55px; }
.showall { margin-left: auto; width: 90px; height: 32px; border: 1px solid #8e8d89; border-radius: 4px; background: #e4e3e0; color: #4c4b47; font-size: 14px; font-weight: 600; letter-spacing: .2px; padding: 0 0 2px; }
.dlx { margin-left: 11px; color: #807f7b; }
```
